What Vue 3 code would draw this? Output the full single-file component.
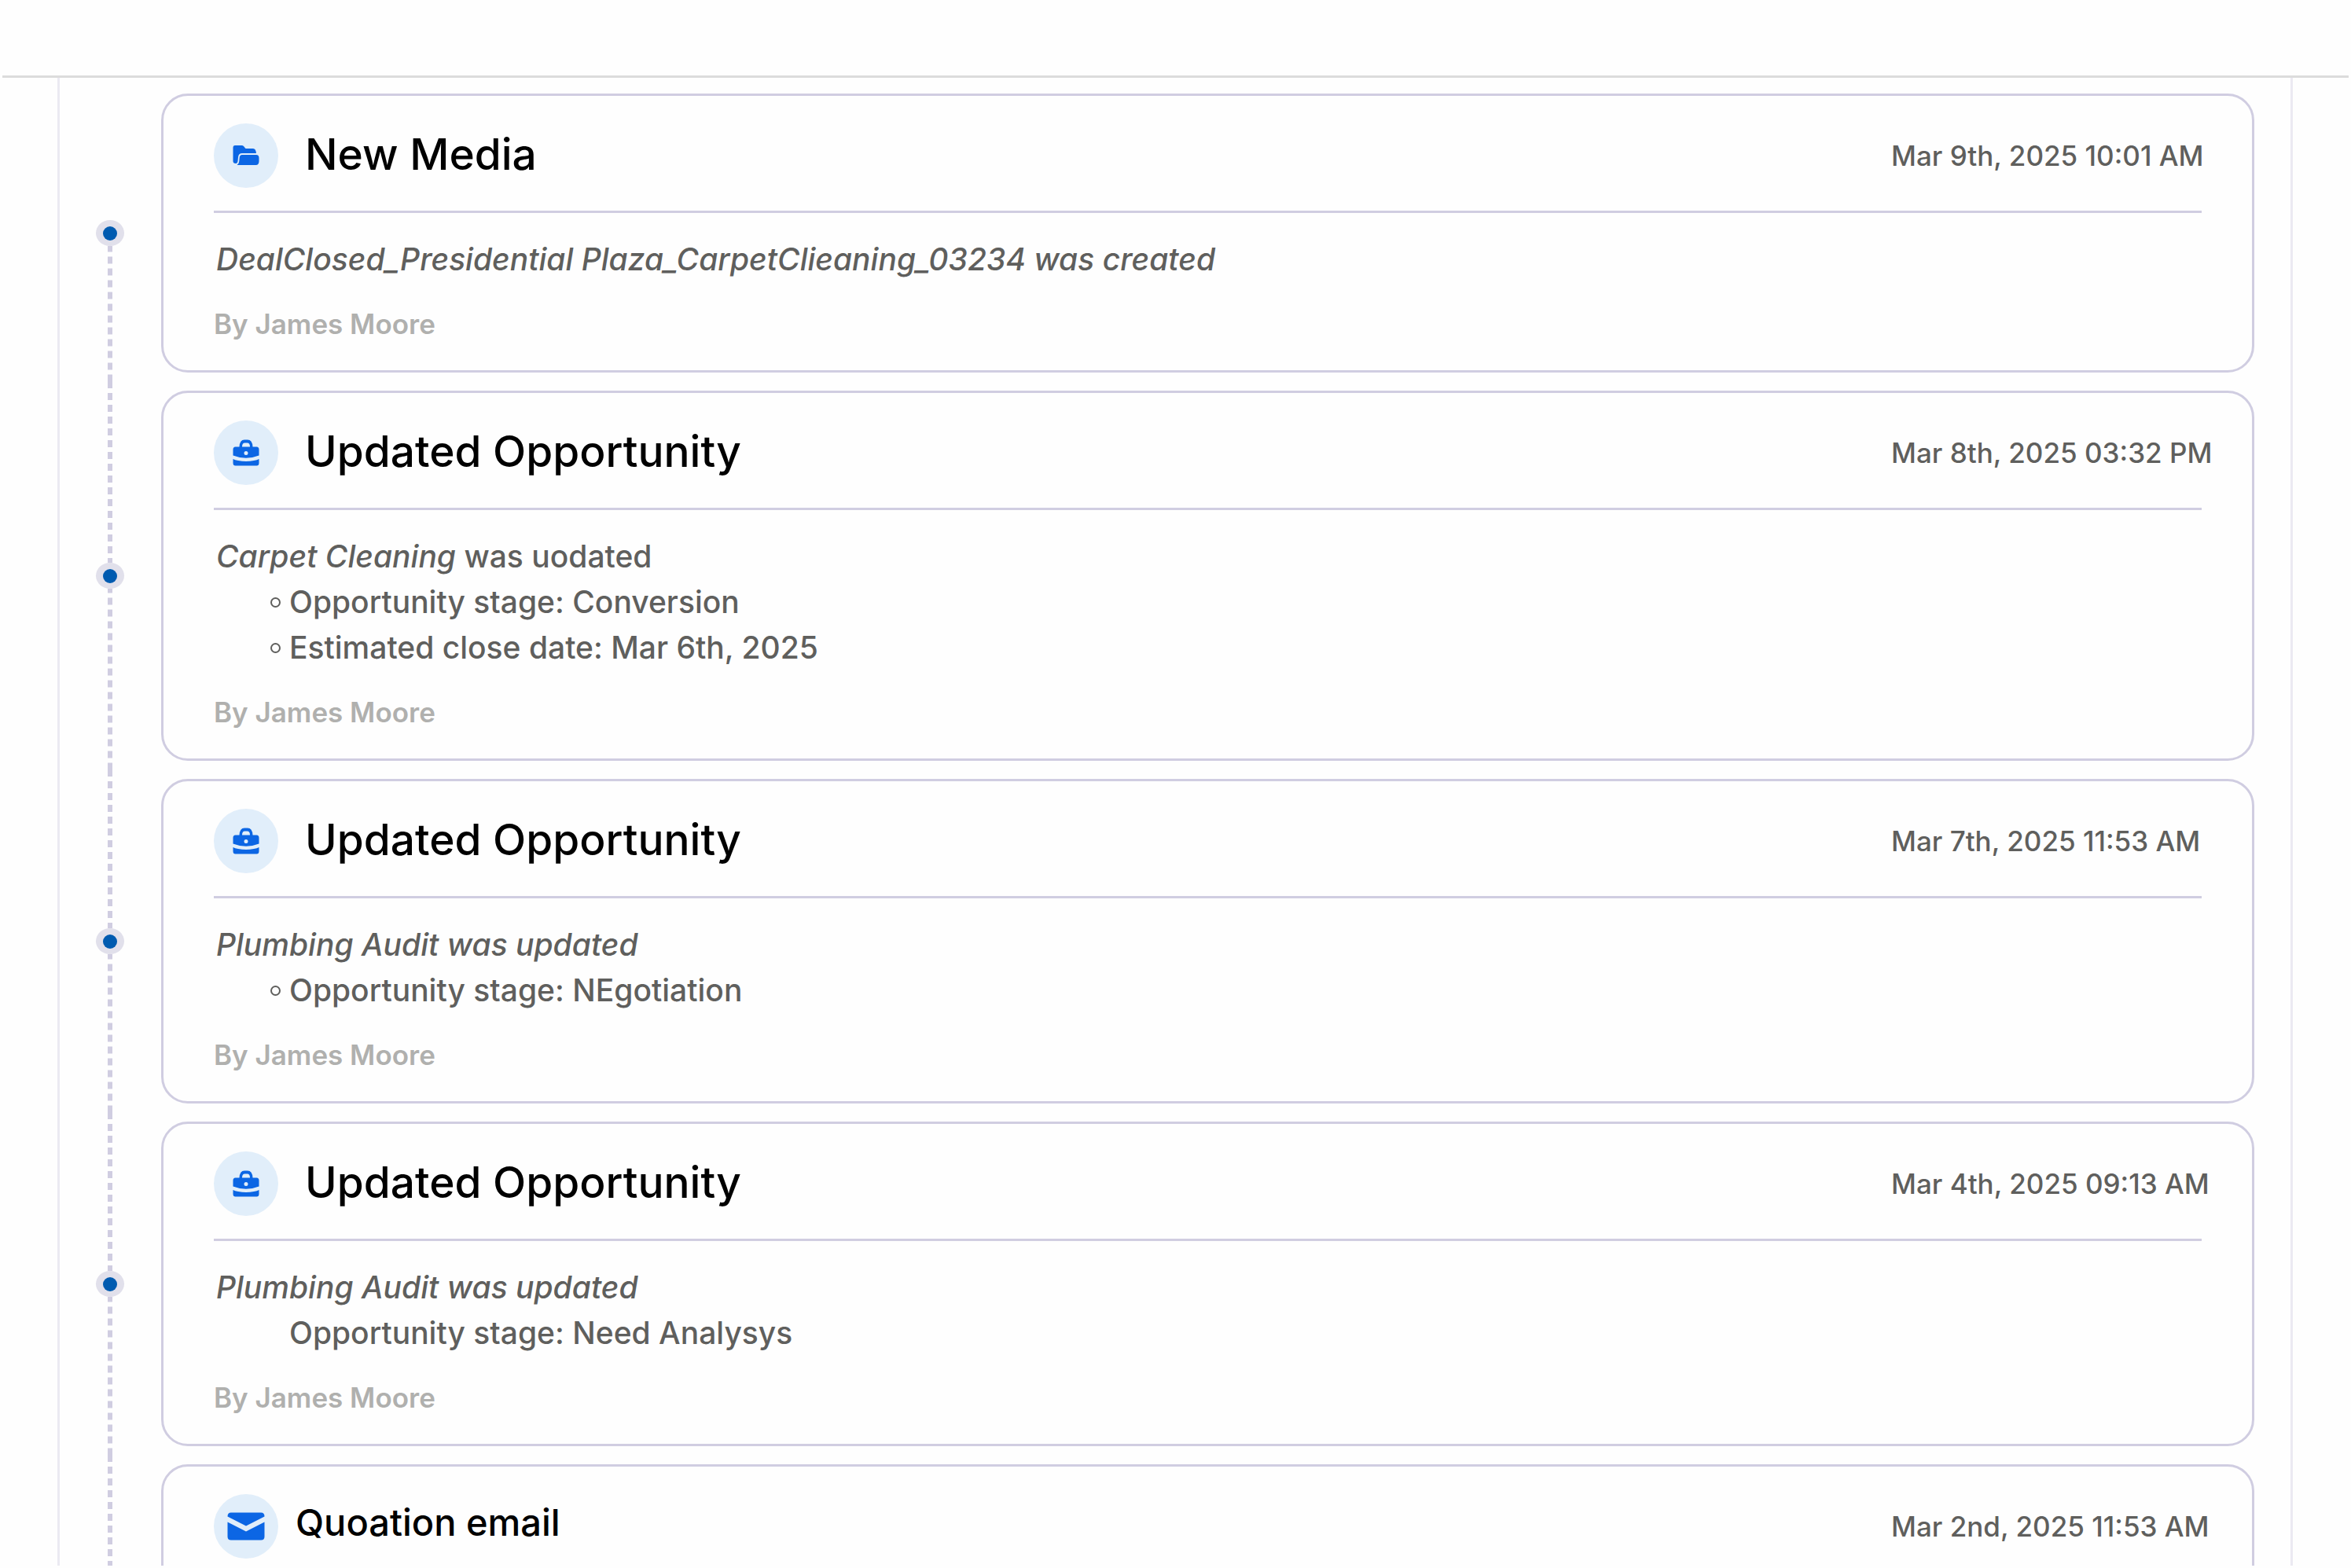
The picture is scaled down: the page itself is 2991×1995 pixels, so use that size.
<script setup>
const activities = [
  {
    icon: 'folder',
    title: 'New Media',
    date: 'Mar 9th, 2025 10:01 AM',
    subject: 'DealClosed_Presidential Plaza_CarpetClieaning_03234 was created',
    author: 'James Moore',
  },
  {
    icon: 'briefcase',
    title: 'Updated Opportunity',
    date: 'Mar 8th, 2025 03:32 PM',
    subject: 'Carpet Cleaning',
    action: 'was uodated',
    changes: ['Opportunity stage: Conversion', 'Estimated close date: Mar 6th, 2025'],
    author: 'James Moore',
  },
  {
    icon: 'briefcase',
    title: 'Updated Opportunity',
    date: 'Mar 7th, 2025 11:53 AM',
    subject: 'Plumbing Audit was updated',
    changes: ['Opportunity stage: NEgotiation'],
    author: 'James Moore',
  },
  {
    icon: 'briefcase',
    title: 'Updated Opportunity',
    date: 'Mar 4th, 2025 09:13 AM',
    subject: 'Plumbing Audit was updated',
    changes: ['Opportunity stage: Need Analysys'],
    plain: true,
    author: 'James Moore',
  },
  {
    icon: 'mail',
    title: 'Quoation email',
    date: 'Mar 2nd, 2025 11:53 AM',
    compact: true,
  },
]
</script>

<template>
  <div class="page">
    <header class="topbar"></header>
    <main class="panel">
      <ol class="timeline">
        <li v-for="item in activities" :key="item.date" class="entry">
          <div class="rail">
            <span class="dash upper"></span>
            <span class="marker"></span>
            <span class="dash lower"></span>
          </div>
          <article class="card" :class="{ compact: item.compact }">
            <div class="card-head">
              <span class="badge">
                <svg v-if="item.icon === 'folder'" class="icon" viewBox="0 0 34 34" aria-hidden="true">
                  <path d="M3 4H11.500Q13 4 14 5L16 7.500Q16.500 8 17.500 8H26Q29.500 8 30 14H12Q7.500 14 7 19L6.500 24Q6 27 4 27Q.5 27 .5 24V7Q.5 4 3 4Z" />
                  <path d="M12 16H30Q33.500 16 33.500 20V24Q33.500 29 29.500 29H5.500Q8 27.500 8.300 24L8.700 19.500Q9 16 12 16Z" />
                </svg>
                <svg v-else-if="item.icon === 'briefcase'" class="icon" viewBox="0 0 34 34" aria-hidden="true">
                  <path fill-rule="evenodd" d="M8.500 9.500Q9 .5 15 .5H19Q25 .5 25.500 9.500H30.500Q33.500 9.500 33.500 13V20.500Q17 27 .5 20.500V13Q.5 9.500 3.500 9.500ZM12 9.500H22Q22 4.500 18.500 4.500H15.500Q12 4.500 12 9.500ZM17 15A2.500 2.500 0 1 0 17 20A2.500 2.500 0 1 0 17 15Z" />
                  <path d="M.5 25Q3 26.500 7 27Q17 29 27 27Q31 26.500 33.500 25V30Q33.500 33.500 30.500 33.500H3.500Q.5 33.500 .5 30Z" />
                </svg>
                <svg v-else class="icon mail" viewBox="0 0 48 36" aria-hidden="true">
                  <path d="M5 .5H43Q47.500 .5 47.500 5.500L24 17.500L.5 5.500Q.5 .5 5 .5Z" />
                  <path d="M.5 12.500L24 24.500L47.500 12.500V31Q47.500 35.500 43 35.500H5Q.5 35.500 .5 31Z" />
                </svg>
              </span>
              <h2 class="title">{{ item.title }}</h2>
              <time class="date">{{ item.date }}</time>
            </div>
            <div v-if="item.subject" class="card-body">
              <p class="summary"><em>{{ item.subject }}</em><template v-if="item.action">{{ ' ' + item.action }}</template></p>
              <ul v-if="item.changes" class="changes" :class="{ plain: item.plain }">
                <li v-for="change in item.changes" :key="change">{{ change }}</li>
              </ul>
              <p class="author">By {{ item.author }}</p>
            </div>
          </article>
        </li>
      </ol>
    </main>
  </div>
</template>

<style>
body {
  margin: 0;
  background: #fefefe;
}
</style>

<style scoped>
.page {
  box-sizing: border-box;
  display: flex;
  flex-direction: column;
  height: 100vh;
  padding: 0 3px 3px;
  overflow: hidden;
  background: #fefefe;
  color: #5f5f5d;
  font-family: Inter, "Liberation Sans", sans-serif;
}

.topbar {
  flex: none;
  height: 96px;
  border-bottom: 3px solid #dcdcdc;
}

.panel {
  flex: 1;
  min-height: 0;
  margin: 0 71px 0 70px;
  padding: 8px 46px 0 0;
  overflow: hidden;
  border: solid #ebeaf2;
  border-width: 0 3px;
}

.timeline {
  margin: 0;
  padding: 0;
  list-style: none;
}

.entry {
  display: flex;
}

.rail {
  display: flex;
  flex: none;
  flex-direction: column;
  align-items: center;
  width: 128px;
  margin-right: 1px;
}

.dash {
  flex: 1;
  width: 6px;
}

.upper {
  background: linear-gradient(#d0cde1 9px, transparent 9px) top / 6px 15px repeat-y;
}

.lower {
  background: linear-gradient(transparent 6px, #d0cde1 6px) bottom / 6px 15px repeat-y;
}

.entry:first-child .upper {
  background: none;
}

.marker {
  display: grid;
  flex: none;
  place-items: center;
  box-sizing: border-box;
  width: 36px;
  height: 33px;
  padding-top: 2px;
  border-radius: 50%;
  background: #e1e0eb;
}

.marker::before {
  content: "";
  width: 18px;
  height: 18px;
  border-radius: 50%;
  background: #005bb0;
}

.card {
  flex: 1;
  box-sizing: border-box;
  min-width: 0;
  margin: 12px 0 11px;
  padding: 35px 64px 30px;
  border: 3px solid #d0cde1;
  border-radius: 34px;
}

.card-head {
  display: flex;
  align-items: center;
  gap: 34px;
  height: 82px;
  padding-bottom: 29px;
  border-bottom: 3px solid #d0cde1;
}

.badge {
  display: grid;
  flex: none;
  place-items: center;
  width: 82px;
  height: 82px;
  border-radius: 50%;
  background: #e1eefa;
}

.icon {
  width: 34px;
  height: 34px;
  fill: #0c66e4;
}

.icon.mail {
  width: 48px;
  height: 36px;
}

.title {
  flex: 1;
  margin: 0;
  padding-bottom: 4px;
  color: #000;
  font-size: 55px;
  font-weight: 500;
  line-height: 64px;
}

.date {
  flex: none;
  width: 395px;
  font-size: 35px;
  font-weight: 500;
  white-space: nowrap;
}

.card-body {
  padding-top: 30px;
  font-size: 39px;
  font-weight: 500;
  line-height: 58px;
}

.summary {
  margin: 0;
  padding-left: 3px;
}

.changes {
  margin: 0;
  padding: 0 0 0 96px;
  list-style: none;
}

.changes li {
  display: flex;
  align-items: center;
}

.changes li::before {
  content: "";
  box-sizing: border-box;
  width: 13px;
  height: 13px;
  margin: 0 11px 0 -24px;
  border: 2px solid #5f5f5d;
  border-radius: 50%;
}

.changes.plain li::before {
  visibility: hidden;
}

.author {
  margin: 24px 0 0;
  color: #b0b0ae;
  font-size: 35px;
  font-weight: 600;
}

.compact {
  min-height: 413px;
}

.compact .card-head {
  gap: 22px;
}

.compact .title {
  padding-bottom: 10px;
  font-size: 47px;
}
</style>
